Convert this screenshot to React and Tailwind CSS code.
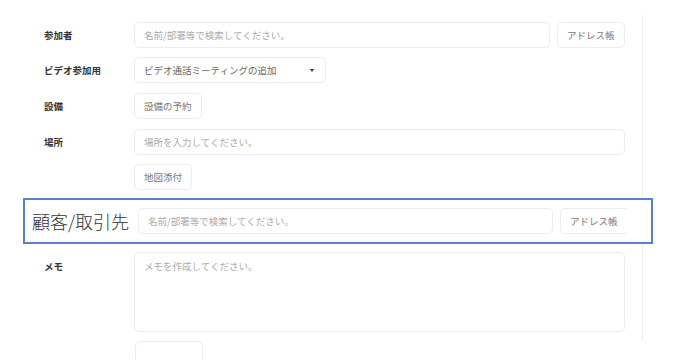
const font = { fontFamily: '"Noto Sans CJK JP", "Noto Sans", sans-serif' };

function Label({ children }) {
  return <div className="w-[90px] shrink-0 text-[9.5px] font-bold text-[#333]">{children}</div>;
}

function Input({ placeholder, className = '' }) {
  return (
    <div
      className={`h-[26px] flex items-center rounded-[5px] border border-[#ececec] bg-white pl-[9px] text-[9.5px] text-[#aaa] ${className}`}
    >
      {placeholder}
    </div>
  );
}

function Btn({ children, className = '' }) {
  return (
    <div
      className={`h-[26px] flex items-center rounded-[5px] border border-[#ececec] bg-white px-[9px] text-[9.5px] text-[#777] ${className}`}
    >
      {children}
    </div>
  );
}

function Row({ label, children, className = '' }) {
  return (
    <div className={`flex items-center pl-[44px] ${className}`}>
      <Label>{label}</Label>
      {children}
    </div>
  );
}

export default function App() {
  return (
    <div className="w-[700px] h-[360px] bg-white overflow-hidden" style={font}>
      <div className="mt-[15px] w-[643px] border-r border-[#eeeeee] pt-[7px] pb-[9px]">
        <Row label="参加者">
          <Input placeholder="名前/部署等で検索してください。" className="w-[416px]" />
          <Btn className="ml-[7px] w-[68px]">アドレス帳</Btn>
        </Row>

        <Row label="ビデオ参加用" className="mt-[9px]">
          <div className="h-[26px] w-[192px] flex items-center justify-between rounded-[5px] border border-[#ececec] pl-[9px] pr-[11px] text-[9.5px] text-[#666]">
            <span>ビデオ通話ミーティングの追加</span>
            <span className="w-0 h-0 border-l-[2.5px] border-r-[2.5px] border-t-[3px] border-l-transparent border-r-transparent border-t-[#333]" />
          </div>
        </Row>

        <Row label="設備" className="mt-[10px]">
          <Btn>設備の予約</Btn>
        </Row>

        <Row label="場所" className="mt-[10px]">
          <Input placeholder="場所を入力してください。" className="w-[491px]" />
        </Row>

        <div className="mt-[9px] pl-[134px]">
          <Btn className="w-[58px]">地図添付</Btn>
        </div>

        <div className="relative mt-[8px] ml-[23px] w-[630px] h-[46px] border-2 border-[#5b7fce] bg-white flex items-center pl-[7px]">
          <div className="w-[106px] shrink-0 text-[18px] font-light text-[#333] leading-none">顧客/取引先</div>
          <Input placeholder="名前/部署等で検索してください。" className="w-[415px]" />
          <Btn className="ml-[7px] w-[67px] rounded-r-none border-r-0">アドレス帳</Btn>
        </div>

        <div className="mt-[8px] flex items-start pl-[44px]">
          <div className="pt-[7px]">
            <Label>メモ</Label>
          </div>
          <div className="h-[80px] w-[491px] rounded-[5px] border border-[#ececec] px-[9px] pt-[6px] text-[9.5px] text-[#aaa]">
            メモを作成してください。
          </div>
        </div>
      </div>

      <div className="pl-[135px]">
        <div className="h-[26px] w-[68px] rounded-[5px] border border-[#ececec]" />
      </div>
    </div>
  );
}
